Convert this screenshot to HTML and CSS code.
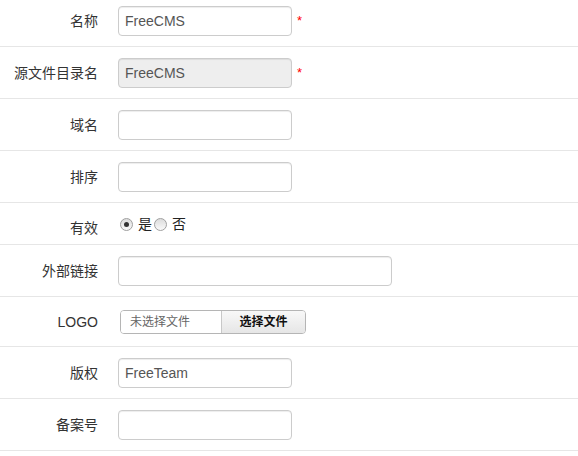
FILE: index.html
```html
<!DOCTYPE html>
<html lang="zh-CN">
<head>
<meta charset="utf-8">
<title>站点设置</title>
<link rel="stylesheet" href="styles.css">
</head>
<body>
<div class="form">
  <div class="row first">
    <label class="lbl">名称</label>
    <div class="ctl"><input class="txt" type="text" value="FreeCMS"><span class="req">*</span></div>
  </div>
  <div class="row">
    <label class="lbl">源文件目录名</label>
    <div class="ctl"><input class="txt" type="text" value="FreeCMS" disabled><span class="req">*</span></div>
  </div>
  <div class="row">
    <label class="lbl">域名</label>
    <div class="ctl"><input class="txt" type="text" value=""></div>
  </div>
  <div class="row">
    <label class="lbl">排序</label>
    <div class="ctl"><input class="txt" type="text" value=""></div>
  </div>
  <div class="row radio-row">
    <label class="lbl lbl-low">有效</label>
    <div class="ctl radios">
      <span class="radio checked"></span><span class="rtext">是</span>
      <span class="radio second"></span><span class="rtext">否</span>
    </div>
  </div>
  <div class="row">
    <label class="lbl">外部链接</label>
    <div class="ctl"><input class="txt wide" type="text" value=""></div>
  </div>
  <div class="row file-row">
    <label class="lbl">LOGO</label>
    <div class="ctl">
      <div class="file">
        <span class="file-name">未选择文件</span>
        <span class="file-btn">选择文件</span>
      </div>
    </div>
  </div>
  <div class="row">
    <label class="lbl">版权</label>
    <div class="ctl"><input class="txt" type="text" value="FreeTeam"></div>
  </div>
  <div class="row">
    <label class="lbl">备案号</label>
    <div class="ctl"><input class="txt" type="text" value=""></div>
  </div>
</div>
</body>
</html>
```

FILE: styles.css
```css
body {
  margin: 0;
  background: #fff;
  color: #333;
  font-family: "Liberation Sans", "Noto Sans CJK SC", sans-serif;
  font-size: 14px;
}

.form {
  width: 578px;
}

.row {
  display: flex;
  align-items: center;
  padding: 11px 0 10px;
  border-bottom: 1px solid #e6e6e6;
}

.row.first {
  padding-top: 6px;
}

.row.radio-row {
  align-items: flex-start;
  padding: 11px 0 6px;
}

.row.file-row {
  padding: 13px 0 12px;
}

.lbl {
  flex: none;
  width: 98px;
  text-align: right;
  line-height: 20px;
  color: #333;
}

.lbl-low {
  margin-top: 4px;
}

.ctl {
  margin-left: 20px;
  display: flex;
  align-items: center;
}

.txt {
  box-sizing: border-box;
  width: 174px;
  height: 30px;
  margin: 0;
  padding: 4px 6px;
  border: 1px solid #ccc;
  border-radius: 4px;
  background: #fff;
  box-shadow: inset 0 1px 1px rgba(0, 0, 0, 0.075);
  font-family: "Liberation Sans", sans-serif;
  font-size: 14px;
  line-height: 20px;
  color: #555;
  outline: none;
}

.txt.wide {
  width: 274px;
}

.txt[disabled] {
  background: #eee;
  color: #555;
  -webkit-text-fill-color: #555;
  opacity: 1;
}

.req {
  align-self: flex-start;
  margin: 5px 0 0 5px;
  color: #f00;
  font-size: 13px;
  line-height: 20px;
}

.radios {
  height: 20px;
  line-height: 20px;
}

.radio {
  box-sizing: border-box;
  display: inline-block;
  width: 13px;
  height: 13px;
  border: 1px solid #a0a0a0;
  border-radius: 50%;
  background: linear-gradient(#dcdcdc, #fafafa);
  position: relative;
  margin-left: 2px;
}

.radio.checked::after {
  content: "";
  position: absolute;
  left: 3px;
  top: 3px;
  width: 5px;
  height: 5px;
  border-radius: 50%;
  background: #333;
}

.rtext {
  margin-left: 5px;
  color: #222;
}

.file {
  box-sizing: border-box;
  display: flex;
  width: 186px;
  height: 24px;
  margin-left: 2px;
  border: 1px solid #b5b5b5;
  border-radius: 4px;
  overflow: hidden;
  font-size: 12px;
  line-height: 22px;
}

.file-name {
  box-sizing: border-box;
  width: 101px;
  padding-left: 9px;
  color: #666;
  background: #fff;
  border-right: 1px solid #c8c8c8;
}

.file-btn {
  flex: 1;
  text-align: center;
  font-weight: bold;
  color: #111;
  background: linear-gradient(#f8f8f8, #e6e6e6);
}
```
